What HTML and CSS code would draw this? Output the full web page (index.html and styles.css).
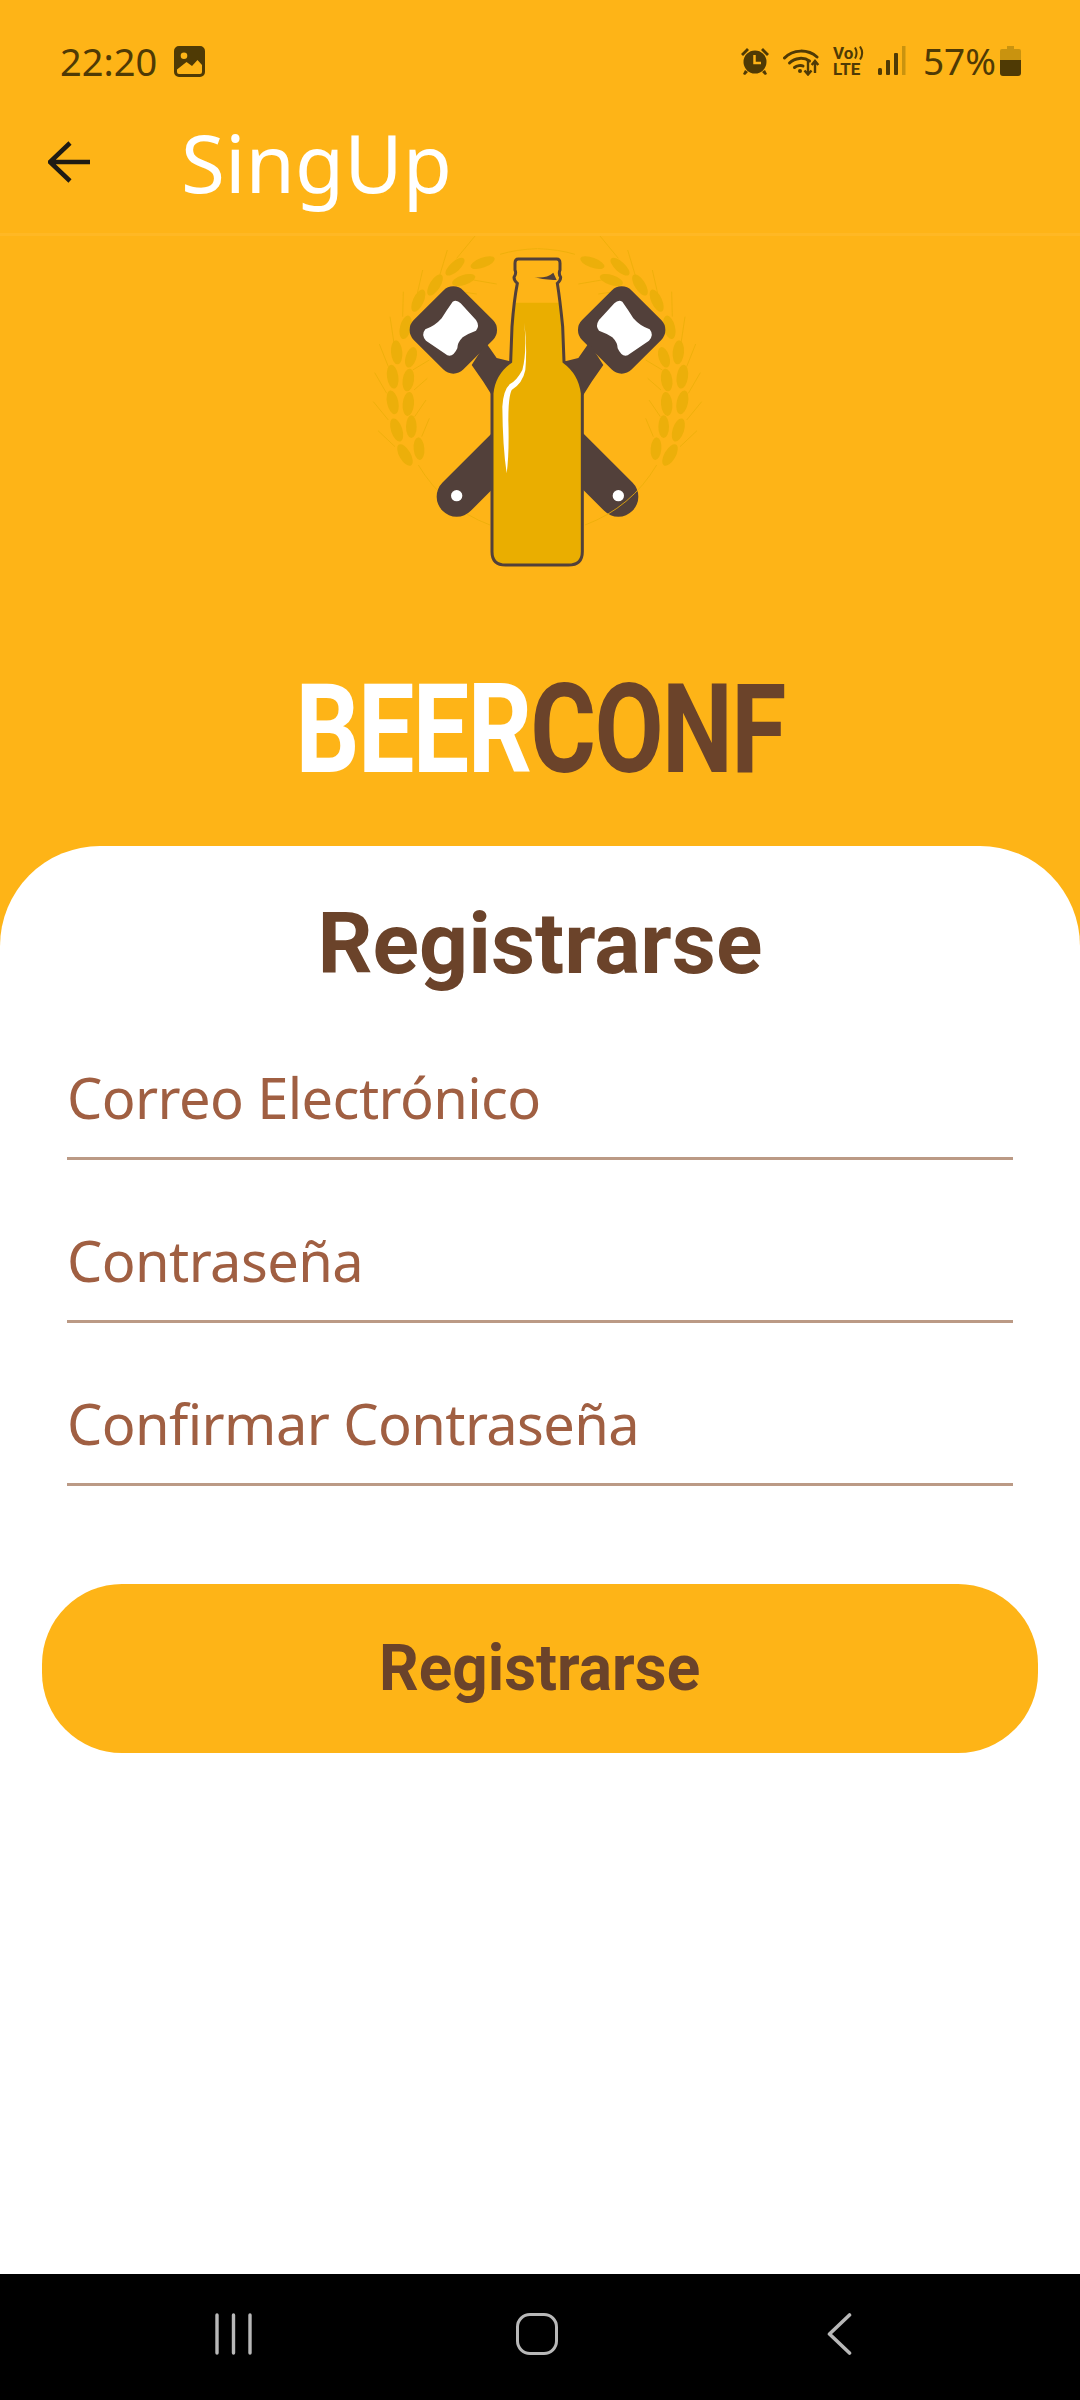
FILE: index.html
```html
<!DOCTYPE html>
<html lang="es">
<head>
<meta charset="utf-8">
<title>SingUp</title>
<link rel="stylesheet" href="styles.css">
</head>
<body>
<div class="screen">
  <header class="top">
    <div class="status">
      <div class="status-left">
        <span class="clock">22:20</span>
        <svg class="ico-img" viewBox="0 0 31 31"><path fill-rule="evenodd" fill="#4f3a05" d="M5 0H26A5 5 0 0 1 31 5V26A5 5 0 0 1 26 31H5A5 5 0 0 1 0 26V5A5 5 0 0 1 5 0ZM10 6.500A3.300 3.300 0 1 0 10 13.100A3.300 3.300 0 1 0 10 6.500ZM3 23.500V26A2 2 0 0 0 5 28H26A2 2 0 0 0 28 26V19L23.500 14L18 20L12.500 16Z"/></svg>
      </div>
      <div class="status-right">
        <svg class="ico-alarm" viewBox="0 0 30 30"><g fill="#4f3a05"><circle cx="15" cy="16" r="11.500"/><path d="M1 8 7 2 9 4 3 10ZM29 8 23 2 21 4 27 10Z"/><path d="M5 24 8 26 5 29 3 28ZM25 24 22 26 25 29 27 28Z"/></g><path d="M14.500 9V17H21" fill="none" stroke="#feb417" stroke-width="2.500"/></svg>
        <svg class="ico-wifi" viewBox="0 0 37 30"><g fill="none" stroke="#4f3a05" stroke-width="3" stroke-linecap="round"><path d="M1.500 12C10 3 25 3 34 11"/><path d="M6.500 17C12 11.500 21 11 26.500 15"/><path d="M11.500 21.500C14 19.500 18 19 20 20"/></g><circle cx="17" cy="25" r="2" fill="#4f3a05"/><path d="M26 15V28M22.500 24.500 26 28.500 29.500 24.500M33 27V15.500M29.700 19 33 15 36.300 19" transform="translate(-1 0)" fill="none" stroke="#4f3a05" stroke-width="2.400"/></svg>
        <div class="volte">
          <span class="volte-top">Vo<svg class="volte-waves" viewBox="0 0 10 14"><path d="M1 1.500C3 5 3 9 1 12.500M6 .5C9 5 9 9 6 13.500" fill="none" stroke="#4f3a05" stroke-width="2"/></svg></span>
          <span class="volte-bottom">LTE</span>
        </div>
        <svg class="ico-signal" viewBox="0 0 28 30"><g fill="#4f3a05"><rect x="0" y="22" width="4" height="7" rx="1.500"/><rect x="8" y="14" width="4" height="15" rx="1"/><rect x="16" y="7" width="4" height="22" rx="1"/></g><rect x="24" y="0" width="3.500" height="29" fill="#c9930f"/></svg>
        <span class="battery-pct">57%</span>
        <svg class="ico-batt" viewBox="0 0 21 30"><path d="M7 0H14V3H19A2 2 0 0 1 21 5V14H0V5A2 2 0 0 1 2 3H7Z" fill="#c9930f"/><path d="M0 14H21V27A3 3 0 0 1 18 30H3A3 3 0 0 1 0 27Z" fill="#4f3a05"/></svg>
      </div>
    </div>
    <div class="appbar">
      <svg class="ico-back" viewBox="0 0 42 42"><path d="M22 2 2 21 22 40M3 21H42" fill="none" stroke="#1f1b14" stroke-width="4.500"/></svg>
      <h1 class="appbar-title">SingUp</h1>
    </div>
  </header>

  <section class="hero">
    <svg class="logo" viewBox="0 48 1200 1032">
      <defs>
        <clipPath id="liquid"><rect x="400" y="248" width="400" height="800"/></clipPath>
        <g id="half">
          <g fill="#ecaf0a">
            <ellipse cx="428" cy="128" rx="15" ry="38" transform="rotate(70 428 128)"/>
            <ellipse cx="345" cy="140" rx="15" ry="36" transform="rotate(48 345 140)"/>
            <ellipse cx="371" cy="180" rx="15" ry="36" transform="rotate(72 371 180)"/>
            <ellipse cx="285" cy="195" rx="16" ry="36" transform="rotate(32 285 195)"/>
            <ellipse cx="235" cy="242" rx="16" ry="36" transform="rotate(25 235 242)"/>
            <ellipse cx="197" cy="322" rx="17" ry="36" transform="rotate(14 197 322)"/>
            <ellipse cx="170" cy="397" rx="17" ry="36" transform="rotate(-5 170 397)"/>
            <ellipse cx="213" cy="412" rx="16" ry="32" transform="rotate(18 213 412)"/>
            <ellipse cx="158" cy="470" rx="17" ry="36" transform="rotate(-8 158 470)"/>
            <ellipse cx="205" cy="480" rx="17" ry="34" transform="rotate(8 205 480)"/>
            <ellipse cx="158" cy="547" rx="17" ry="36" transform="rotate(-12 158 547)"/>
            <ellipse cx="205" cy="552" rx="17" ry="36" transform="rotate(5 205 552)"/>
            <ellipse cx="170" cy="630" rx="17" ry="36" transform="rotate(-18 170 630)"/>
            <ellipse cx="214" cy="620" rx="16" ry="34" transform="rotate(0 214 620)"/>
            <ellipse cx="195" cy="705" rx="17" ry="36" transform="rotate(-30 195 705)"/>
            <ellipse cx="237" cy="686" rx="16" ry="34" transform="rotate(-5 237 686)"/>
          </g>
          <g fill="none" stroke="#ecaf0a" stroke-width="2.500">
            <path d="M405 48 350 115M322 90 298 170M248 150 232 220M190 215 188 290M150 290 162 370M118 372 145 440M104 458 140 520M100 545 145 600M114 632 165 680M268 420 218 450M262 475 222 510M258 540 224 590M268 595 245 650M470 192 400 180M410 222 360 215"/>
            <path d="M235 735A424 424 0 0 0 450 915"/>
            <path d="M592 86Q530 88 480 103"/>
          </g>
          <rect x="235" y="225" width="210" height="210" rx="42" transform="rotate(45 340 330)" fill="#52403a"/>
          <path d="M438 368 470 414 515 425V525H455L430 485 395 435Z" fill="#52403a"/>
          <path d="M600 510 835 828" fill="none"/>
          <path d="M690 685 835 830" fill="none" stroke="#52403a" stroke-width="120" stroke-linecap="round"/>
          <path d="M338 245Q350 238 362 250L408 300Q420 318 408 332Q385 340 368 352Q352 368 352 385Q340 412 322 406L258 362Q242 345 256 328Q285 318 305 295Q320 270 338 245Z" fill="#fff"/>
          <circle cx="835" cy="827" r="17" fill="#fff"/>
        </g>
      </defs>
      <use href="#half"/>
      <use href="#half" transform="translate(1185 0) scale(-1 1)"/>
      <path clip-path="url(#liquid)" fill="#eaae00" d="M535 117H650Q660 117 660 130V150Q655 160 662 172Q662 182 652 190Q660 240 668 320L672 425Q720 460 727 520V995Q727 1035 685 1035H497Q456 1035 456 995V520Q462 460 512 425L516 320Q522 240 532 190Q522 182 522 172Q530 160 525 150V130Q525 117 535 117Z"/>
      <path fill="none" stroke="#52403a" stroke-width="9" d="M535 117H650Q660 117 660 130V150Q655 160 662 172Q662 182 652 190Q660 240 668 320L672 425Q720 460 727 520V995Q727 1035 685 1035H497Q456 1035 456 995V520Q462 460 512 425L516 320Q522 240 532 190Q522 182 522 172Q530 160 525 150V130Q525 117 535 117Z"/>
      <path fill="#52403a" d="M583 172Q620 176 640 158L650 180Q620 182 583 172Z"/>
      <path fill="#fff" d="M553 308Q561 400 547 450Q530 482 510 492Q490 510 487 560Q488 680 500 760Q508 700 505 600Q505 530 515 510Q548 490 556 450Q562 380 553 308Z"/>
    </svg>
    <div class="brand"><span class="brand-inner"><span class="brand-a">BEER</span><span class="brand-b">CONF</span></span></div>
  </section>

  <main class="card">
    <h2 class="card-title">Registrarse</h2>
    <div class="fields">
      <div class="field">Correo Electrónico</div>
      <div class="field">Contraseña</div>
      <div class="field">Confirmar Contraseña</div>
    </div>
    <button class="submit" type="button"><span class="submit-label">Registrarse</span></button>
  </main>

  <nav class="nav">
    <div class="nav-slot">
      <svg class="ico-menu" viewBox="0 0 37 42"><path d="M2 2V40M18.500 2V40M35 2V40" stroke="#b8b8b8" stroke-width="3.400" stroke-linecap="round"/></svg>
    </div>
    <div class="nav-slot"><span class="ico-home"></span></div>
    <div class="nav-slot">
      <svg class="ico-navback" viewBox="0 0 25 42"><path d="M22.500 2 2.500 21 22.500 40" fill="none" stroke="#b8b8b8" stroke-width="3.600" stroke-linecap="round" stroke-linejoin="round"/></svg>
    </div>
  </nav>
</div>
</body>
</html>
```

FILE: styles.css
```css
* { box-sizing: border-box; }
html, body { margin: 0; padding: 0; }
body { background: #fff; font-family: "Noto Sans", sans-serif; }
.screen { width: 1080px; height: 2400px; display: flex; flex-direction: column; background: #feb417; overflow: hidden; }

.top { height: 236px; flex: none; border-bottom: 3px solid #ffb824; }
.status { height: 90px; padding: 44px 59px 0 60px; display: flex; justify-content: space-between; align-items: flex-start; color: #4f3a05; }
.status-left { display: flex; align-items: center; gap: 17px; }
.clock { font-size: 38px; line-height: 34px; }
.ico-img { width: 31px; height: 31px; display: block; }
.status-right { display: flex; align-items: center; margin-top: 1px; }
.ico-alarm { width: 30px; height: 30px; }
.ico-wifi { width: 37px; height: 30px; margin-left: 13px; }
.volte { width: 32px; margin-left: 13px; display: flex; flex-direction: column; font-family: "Roboto", sans-serif; font-weight: 700; font-size: 17px; line-height: 16px; }
.volte-top { display: flex; align-items: center; }
.volte-waves { width: 10px; height: 14px; margin-left: 1px; }
.ico-signal { width: 28px; height: 30px; margin-left: 13px; }
.battery-pct { font-size: 37px; line-height: 30px; margin-left: 17px; }
.ico-batt { width: 21px; height: 30px; margin-left: 4px; }

.appbar { height: 143px; padding: 0 0 0 48px; display: flex; align-items: flex-start; }
.ico-back { width: 42px; height: 42px; margin-top: 51px; flex: none; }
.appbar-title { margin: 22px 0 0 91px; font-size: 80px; line-height: 100px; font-weight: 400; color: #fff; }

.hero { height: 610px; flex: none; display: flex; flex-direction: column; align-items: center; }
.logo { width: 400px; height: 344px; display: block; flex: none; }
.brand { margin-top: 88px; width: 100%; display: flex; justify-content: center; }
.brand-inner { display: inline-block; font-family: "Roboto", sans-serif; font-weight: 700; font-size: 124px; line-height: 124px; letter-spacing: -2px; transform: scaleX(.81); white-space: nowrap; }
.brand-a { color: #fff; }
.brand-b { color: #6b432a; }

.card { flex: 1; background: #fff; border-radius: 100px 100px 0 0; padding-top: 48px; display: flex; flex-direction: column; align-items: center; }
.card-title { margin: 0; font-family: "Roboto", sans-serif; font-weight: 700; font-size: 86px; line-height: 100px; color: #6b432a; }
.fields { width: 946px; margin-top: 3px; }
.field { height: 163px; border-bottom: 3px solid #bb9a85; color: #a05f42; font-size: 56px; line-height: 76px; padding-top: 62px; letter-spacing: -.6px; }
.submit { width: 996px; height: 169px; margin-top: 98px; border: 0; padding: 0; border-radius: 80px; background: #feb417; color: #6b432a; font-family: "Roboto", sans-serif; font-weight: 700; font-size: 64px; }
.submit-label { display: inline-block; transform: scaleX(.97); }

.nav { height: 126px; flex: none; background: #000; padding: 39px 0 0 82px; display: grid; grid-template-columns: repeat(3, 303px); align-items: start; }
.nav-slot { display: flex; justify-content: center; }
.ico-menu { width: 37px; height: 42px; display: block; }
.ico-home { width: 42px; height: 42px; border: 3.500px solid #b8b8b8; border-radius: 14px; display: block; }
.ico-navback { width: 25px; height: 42px; display: block; }
```
